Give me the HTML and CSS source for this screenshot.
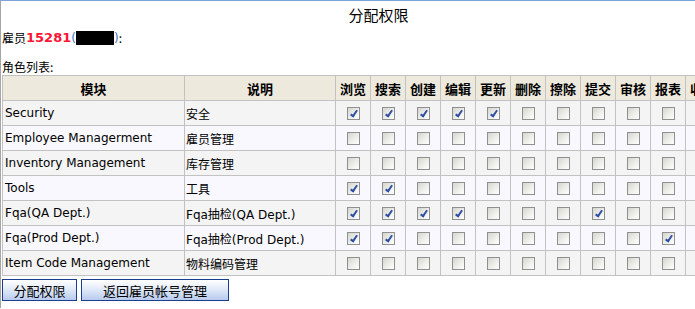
FILE: index.html
```html
<!DOCTYPE html>
<html lang="zh">
<head>
    <meta charset="UTF-8">
    <title>分配权限</title>
    <link rel="stylesheet" href="styles.css">
</head>
<body>
    <div class="page">
        <div class="title">分配权限</div>

        <div class="emp">雇员<span class="emp-no">15281</span><span class="paren">(</span><span class="mask"></span><span class="paren">)</span>:</div>

        <div class="list-label">角色列表:</div>

        <table class="perm">
            <colgroup>
                <col class="c-module">
                <col class="c-desc">
                <col class="c-cb"><col class="c-cb"><col class="c-cb"><col class="c-cb">
                <col class="c-cb"><col class="c-cb"><col class="c-cb"><col class="c-cb">
                <col class="c-cb"><col class="c-cb"><col class="c-cb"><col class="c-cb">
            </colgroup>
            <thead>
                <tr>
                    <th>模块</th>
                    <th>说明</th>
                    <th>浏览</th>
                    <th>搜索</th>
                    <th>创建</th>
                    <th>编辑</th>
                    <th>更新</th>
                    <th>删除</th>
                    <th>擦除</th>
                    <th>提交</th>
                    <th>审核</th>
                    <th>报表</th>
                    <th>收货</th>
                    <th>发货</th>
                </tr>
            </thead>
            <tbody>
                <tr class="odd">
                    <td class="en">Security</td>
                    <td class="zh">安全</td>
                    <td><span class="cb on"></span></td>
                    <td><span class="cb on"></span></td>
                    <td><span class="cb on"></span></td>
                    <td><span class="cb on"></span></td>
                    <td><span class="cb on"></span></td>
                    <td><span class="cb"></span></td>
                    <td><span class="cb"></span></td>
                    <td><span class="cb"></span></td>
                    <td><span class="cb"></span></td>
                    <td><span class="cb"></span></td>
                    <td><span class="cb"></span></td>
                    <td><span class="cb"></span></td>
                </tr>
                <tr class="even">
                    <td class="en">Employee Managerment</td>
                    <td class="zh">雇员管理</td>
                    <td><span class="cb"></span></td>
                    <td><span class="cb"></span></td>
                    <td><span class="cb"></span></td>
                    <td><span class="cb"></span></td>
                    <td><span class="cb"></span></td>
                    <td><span class="cb"></span></td>
                    <td><span class="cb"></span></td>
                    <td><span class="cb"></span></td>
                    <td><span class="cb"></span></td>
                    <td><span class="cb"></span></td>
                    <td><span class="cb"></span></td>
                    <td><span class="cb"></span></td>
                </tr>
                <tr class="odd">
                    <td class="en">Inventory Management</td>
                    <td class="zh">库存管理</td>
                    <td><span class="cb"></span></td>
                    <td><span class="cb"></span></td>
                    <td><span class="cb"></span></td>
                    <td><span class="cb"></span></td>
                    <td><span class="cb"></span></td>
                    <td><span class="cb"></span></td>
                    <td><span class="cb"></span></td>
                    <td><span class="cb"></span></td>
                    <td><span class="cb"></span></td>
                    <td><span class="cb"></span></td>
                    <td><span class="cb"></span></td>
                    <td><span class="cb"></span></td>
                </tr>
                <tr class="even">
                    <td class="en">Tools</td>
                    <td class="zh">工具</td>
                    <td><span class="cb on"></span></td>
                    <td><span class="cb on"></span></td>
                    <td><span class="cb"></span></td>
                    <td><span class="cb"></span></td>
                    <td><span class="cb"></span></td>
                    <td><span class="cb"></span></td>
                    <td><span class="cb"></span></td>
                    <td><span class="cb"></span></td>
                    <td><span class="cb"></span></td>
                    <td><span class="cb"></span></td>
                    <td><span class="cb"></span></td>
                    <td><span class="cb"></span></td>
                </tr>
                <tr class="odd">
                    <td class="en">Fqa(QA Dept.)</td>
                    <td class="zh">Fqa抽检(QA Dept.)</td>
                    <td><span class="cb on"></span></td>
                    <td><span class="cb on"></span></td>
                    <td><span class="cb on"></span></td>
                    <td><span class="cb on"></span></td>
                    <td><span class="cb"></span></td>
                    <td><span class="cb"></span></td>
                    <td><span class="cb"></span></td>
                    <td><span class="cb on"></span></td>
                    <td><span class="cb"></span></td>
                    <td><span class="cb"></span></td>
                    <td><span class="cb"></span></td>
                    <td><span class="cb"></span></td>
                </tr>
                <tr class="even">
                    <td class="en">Fqa(Prod Dept.)</td>
                    <td class="zh">Fqa抽检(Prod Dept.)</td>
                    <td><span class="cb on"></span></td>
                    <td><span class="cb on"></span></td>
                    <td><span class="cb"></span></td>
                    <td><span class="cb"></span></td>
                    <td><span class="cb"></span></td>
                    <td><span class="cb"></span></td>
                    <td><span class="cb"></span></td>
                    <td><span class="cb"></span></td>
                    <td><span class="cb"></span></td>
                    <td><span class="cb on"></span></td>
                    <td><span class="cb"></span></td>
                    <td><span class="cb"></span></td>
                </tr>
                <tr class="odd">
                    <td class="en">Item Code Management</td>
                    <td class="zh">物料编码管理</td>
                    <td><span class="cb"></span></td>
                    <td><span class="cb"></span></td>
                    <td><span class="cb"></span></td>
                    <td><span class="cb"></span></td>
                    <td><span class="cb"></span></td>
                    <td><span class="cb"></span></td>
                    <td><span class="cb"></span></td>
                    <td><span class="cb"></span></td>
                    <td><span class="cb"></span></td>
                    <td><span class="cb"></span></td>
                    <td><span class="cb"></span></td>
                    <td><span class="cb"></span></td>
                </tr>
            </tbody>
        </table>

        <div class="actions">
            <button type="button" class="btn btn-assign">分配权限</button>
            <button type="button" class="btn btn-back">返回雇员帐号管理</button>
        </div>
    </div>
</body>
</html>
```

FILE: styles.css
```css
/* page frame */
html {
    overflow: hidden;
}

body {
    margin: 0;
    padding: 0 0 0 1px;
    border-top: 1px solid #7ea3d9;
    border-left: 1px solid #a5a5a5;
    height: 308px;
    box-sizing: border-box;
    background: #fff;
    color: #000;
    font-family: "DejaVu Sans", "Noto Sans CJK SC", sans-serif;
    font-size: 12px;
}

.page {
    width: 753px;
}

.title {
    text-align: center;
    font-family: "Noto Sans CJK SC", sans-serif;
    font-size: 15px;
    line-height: 21px;
    padding-top: 3px;
}

.emp {
    font-family: "Noto Sans CJK SC", sans-serif;
    font-size: 12px;
    line-height: 26px;
    display: flex;
    align-items: center;
}

.emp-no {
    color: #ff1433;
    font-family: "DejaVu Sans", sans-serif;
    font-weight: bold;
    font-size: 13px;
}

.paren {
    color: #3b73c4;
    font-family: "DejaVu Sans", sans-serif;
}

.mask {
    display: inline-block;
    width: 38px;
    height: 14px;
    background: #000;
}

.list-label {
    font-family: "Noto Sans CJK SC", sans-serif;
    margin-top: 8px;
    line-height: 16px;
}

/* permission table */
.perm {
    border-collapse: collapse;
    table-layout: fixed;
    width: 753px;
}

.c-module { width: 182px; }
.c-desc { width: 151px; }
.c-cb { width: 35px; }

.perm th,
.perm td {
    border: 1px solid #c2c2c2;
    height: 24px;
    padding: 0 2px;
    white-space: nowrap;
    overflow: hidden;
}

.perm th {
    background: #ede9dc;
    font-family: "Noto Sans CJK SC", sans-serif;
    font-weight: bold;
    font-size: 13px;
    text-align: center;
}

.perm td {
    text-align: center;
}

.perm td.en {
    text-align: left;
    padding-left: 2px;
}

.perm td.zh {
    text-align: left;
    padding-left: 1px;
    font-family: "DejaVu Sans", "Noto Sans CJK SC", sans-serif;
}

.perm tr.odd td {
    background: #f4f4f4;
}

.perm tr.even td {
    background: #f8f8fe;
}

/* xp style checkbox */
.cb {
    position: relative;
    display: inline-block;
    width: 13px;
    height: 13px;
    box-sizing: border-box;
    border: 1px solid #8f9090;
    background: linear-gradient(135deg, #d6d6d0 0%, #eeeeea 55%, #fff 100%);
    vertical-align: middle;
    margin-top: 1px;
}

.cb.on::after {
    content: "";
    position: absolute;
    left: 4px;
    top: 1px;
    width: 2px;
    height: 6px;
    border: solid #2f4fa3;
    border-width: 0 2px 2px 0;
    transform: rotate(35deg);
}

/* buttons */
.actions {
    margin-top: 3px;
    display: flex;
    gap: 4px;
}

.btn {
    height: 22px;
    padding: 0;
    border: 1px solid #1d3d8f;
    border-radius: 0;
    background: linear-gradient(to bottom, #ffffff 0%, #e6edf9 40%, #b7cbee 100%);
    font-family: "Noto Sans CJK SC", sans-serif;
    font-size: 13px;
    color: #000;
    cursor: pointer;
}

.btn-assign { width: 75px; }
.btn-back { width: 148px; }
```
